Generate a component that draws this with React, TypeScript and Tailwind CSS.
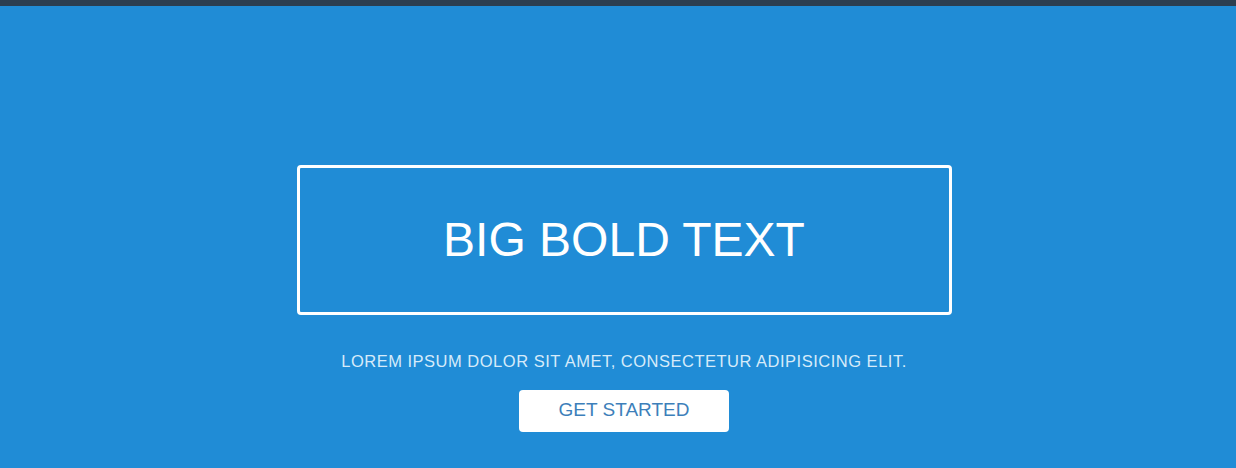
import React from "react";

const App = () => {
  return (
    <div
      className="min-h-[468px] w-full bg-[#208cd6] flex flex-col"
      style={{ fontFamily: '"Liberation Sans", Arial, sans-serif' }}
    >
      <div className="h-[6px] bg-[#2c3e50]" />
      <div className="flex flex-col items-center pt-[159px] pl-[12px]">
        <div className="w-[655px] h-[150px] border-[3px] border-white rounded-[4px] flex items-center justify-center">
          <h1 className="text-white text-[48px] leading-none">BIG BOLD TEXT</h1>
        </div>
        <p className="mt-[38px] text-[#d6ebfa] text-[16.5px] leading-none tracking-[0.5px]">
          LOREM IPSUM DOLOR SIT AMET, CONSECTETUR ADIPISICING ELIT.
        </p>
        <button className="mt-[20px] w-[210px] h-[42px] pb-[2px] bg-white rounded-[4px] text-[#3d7fba] text-[19px] leading-none">
          GET STARTED
        </button>
      </div>
    </div>
  );
};

export default App;
